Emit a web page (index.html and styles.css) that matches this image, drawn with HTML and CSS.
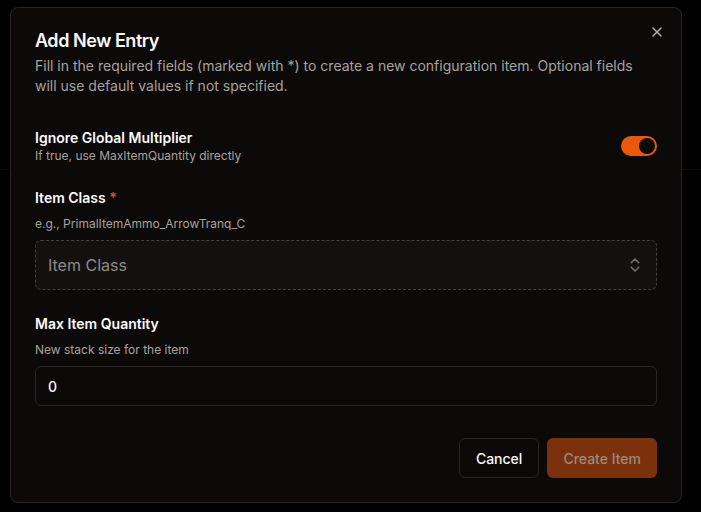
FILE: index.html
```html
<!DOCTYPE html>
<html lang="en">
<head>
<meta charset="utf-8">
<title>Add New Entry</title>
<link rel="stylesheet" href="styles.css">
</head>
<body>
<div class="page">
  <div class="page-top"></div>
</div>
<div class="dialog" role="dialog">
  <button class="close" aria-label="Close">
    <svg width="16" height="16" viewBox="0 0 24 24" fill="none" stroke="currentColor" stroke-width="2" stroke-linecap="round" stroke-linejoin="round"><path d="M18 6 6 18"/><path d="m6 6 12 12"/></svg>
  </button>
  <div class="header">
    <h2 class="title">Add New Entry</h2>
    <p class="desc">Fill in the required fields (marked with *) to create a new configuration item. Optional fields will use default values if not specified.</p>
  </div>
  <div class="form">
    <div class="toggle-row">
      <div class="toggle-text">
        <div class="label">Ignore Global Multiplier</div>
        <div class="sub">If true, use MaxItemQuantity directly</div>
      </div>
      <div class="switch"><span class="thumb"></span></div>
    </div>
    <div class="field">
      <div class="label">Item Class <span class="req">*</span></div>
      <div class="hint">e.g., PrimalItemAmmo_ArrowTranq_C</div>
      <div class="select">
        <span class="placeholder">Item Class</span>
        <svg class="chev" width="18" height="18" viewBox="0 0 24 24" fill="none" stroke="currentColor" stroke-width="2" stroke-linecap="round" stroke-linejoin="round"><path d="m7 15 5 5 5-5"/><path d="m7 9 5-5 5 5"/></svg>
      </div>
    </div>
    <div class="field">
      <div class="label">Max Item Quantity</div>
      <div class="hint">New stack size for the item</div>
      <div class="input">0</div>
    </div>
  </div>
  <div class="footer">
    <button class="btn btn-outline">Cancel</button>
    <button class="btn btn-primary">Create Item</button>
  </div>
</div>
</body>
</html>
```
FILE: styles.css
```css
* { box-sizing: border-box; }
html, body {
  margin: 0;
  padding: 0;
  background: #000;
  height: 512px;
  overflow: hidden;
  font-family: Inter, "Noto Sans", sans-serif;
}
.page-top {
  height: 170px;
  border-bottom: 1px solid #0b0b0b;
}
.dialog {
  position: absolute;
  left: 10px;
  top: 7px;
  width: 672px;
  padding: 24px;
  background: #0c0a09;
  border: 1px solid #292524;
  border-radius: 8px;
  display: flex;
  flex-direction: column;
  gap: 16px;
}
.close {
  position: absolute;
  right: 16px;
  top: 16px;
  width: 16px;
  height: 16px;
  padding: 0;
  border: 0;
  background: none;
  color: #b5b0ab;
  display: flex;
}
.header {
  display: flex;
  flex-direction: column;
  gap: 6px;
}
.title {
  margin: 0;
  font-size: 18px;
  line-height: 18px;
  font-weight: 600;
  color: #fafaf9;
  letter-spacing: -0.45px;
}
.desc {
  margin: 0;
  font-size: 14px;
  line-height: 20px;
  color: #a8a29e;
}
.form {
  padding: 16px 0;
  display: flex;
  flex-direction: column;
  gap: 24px;
}
.toggle-row {
  display: flex;
  align-items: center;
  justify-content: space-between;
}
.label {
  font-size: 14px;
  line-height: 20px;
  font-weight: 600;
  color: #fafaf9;
}
.req { color: #ef4444; }
.sub, .hint {
  font-size: 12px;
  line-height: 16px;
  color: #a8a29e;
}
.switch {
  width: 36px;
  height: 20px;
  border-radius: 10px;
  background: #ea580c;
  padding: 2px;
  display: flex;
  justify-content: flex-end;
}
.thumb {
  width: 16px;
  height: 16px;
  border-radius: 50%;
  background: #0c0a09;
}
.field {
  display: flex;
  flex-direction: column;
  gap: 8px;
}
.select {
  height: 50px;
  border: 1px dashed #44403c;
  border-radius: 6px;
  background: #121110;
  padding: 0 12px;
  display: flex;
  align-items: center;
  justify-content: space-between;
}
.placeholder {
  font-size: 16px;
  color: #8f8a85;
}
.chev { color: #77726d; }
.input {
  height: 40px;
  border: 1px solid #292524;
  border-radius: 6px;
  padding: 0 12px;
  display: flex;
  align-items: center;
  font-size: 14px;
  font-weight: 500;
  color: #fafaf9;
}
.footer {
  display: flex;
  justify-content: flex-end;
  gap: 8px;
}
.btn {
  height: 40px;
  padding: 0 16px;
  border-radius: 6px;
  font-family: inherit;
  font-size: 14px;
  font-weight: 500;
}
.btn-outline {
  background: #0c0a09;
  border: 1px solid #292524;
  color: #fafaf9;
}
.btn-primary {
  background: #7b310b;
  border: 0;
  color: #9a8a80;
}
```
